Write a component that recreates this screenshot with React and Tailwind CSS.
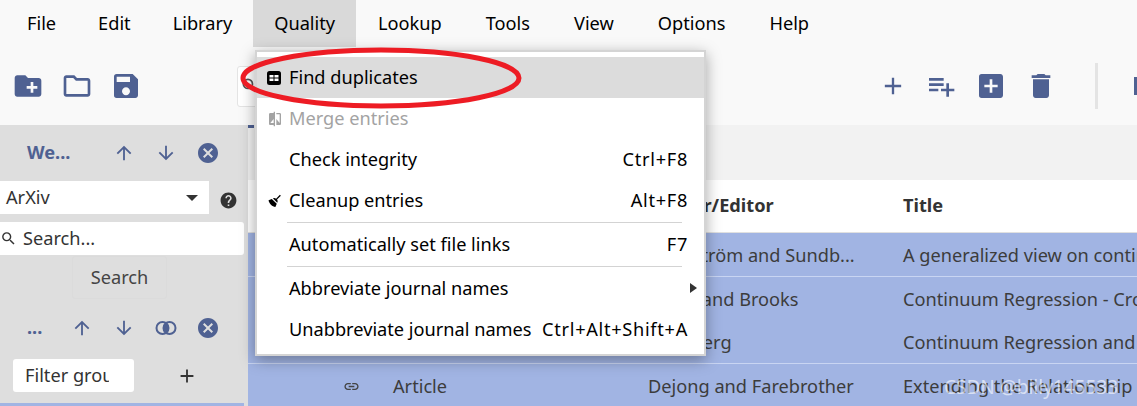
import React from 'react';
import {
  MdCreateNewFolder, MdOutlineFolder, MdSave, MdAdd, MdPlaylistAdd, MdAddBox, MdDelete,
  MdArrowUpward, MdArrowDownward, MdCancel, MdHelp, MdSearch, MdLink, MdCompare,
} from 'react-icons/md';

const iconColor = 'text-[#4f6192]';
const menus = ['File', 'Edit', 'Library', 'Quality', 'Lookup', 'Tools', 'View', 'Options', 'Help'];

const Broom = () => (
  <svg viewBox="0 0 24 24" className="w-[16px] h-[16px] fill-black">
    <path d="M19.36,2.72L20.78,4.14L15.06,9.85C16.13,11.39 16.28,13.24 15.38,14.44L9.06,8.12C10.26,7.22 12.11,7.37 13.65,8.44L19.36,2.72M5.93,17.57C3.92,15.56 2.69,13.16 2.33,10.92L7.2,8.83L14.67,16.3L12.58,21.17C10.34,20.81 7.94,19.58 5.93,17.57Z" />
  </svg>
);

const TableIcon = () => (
  <svg viewBox="0 0 14 14" className="w-[14px] h-[14px]">
    <rect width="14" height="14" rx="2.5" fill="#000" />
    <path d="M2.5 4h4v2.5h-4zM7.5 4h4v2.5h-4zM2.5 7.5h4V10h-4zM7.5 7.5h4V10h-4z" fill="#fff" />
  </svg>
);

const Overlap = () => (
  <svg viewBox="0 0 22 16" className="w-[22px] h-[16px] ml-[20px]">
    <path d="M11 3a6 6 0 0 1 0 10a6 6 0 0 1 0-10z" fill="#4f6192" />
    <circle cx="7.5" cy="8" r="6" fill="none" stroke="#4f6192" strokeWidth="2" />
    <circle cx="14.5" cy="8" r="6" fill="none" stroke="#4f6192" strokeWidth="2" />
  </svg>
);

const MenuRow = ({ icon, label, shortcut, arrow, active, disabled }) => (
  <div className={`flex items-center h-[41px] pl-[10px] pr-[16px] relative ${active ? 'bg-[#dcdcdc]' : ''} ${disabled ? 'text-[#a3a3a3]' : 'text-black'}`}>
    <span className="w-[22px] flex items-center justify-start">{icon}</span>
    <span className="flex-1 whitespace-nowrap">{label}</span>
    {shortcut && <span className="whitespace-nowrap tracking-[0.7px]">{shortcut}</span>}
    {arrow && <span className="absolute right-[7px] top-[15px] w-0 h-0 border-y-[5px] border-y-transparent border-l-[7px] border-l-[#333]" />}
  </div>
);

const Separator = () => <div className="h-[1px] bg-[#d3d3d3] ml-[30px] mr-[22px] my-[1px]" />;

const Row = ({ author, title, divider, icon, type }) => (
  <div className={`flex items-center h-[43.5px] pt-[3px] shrink-0 text-[#3c3c3c] whitespace-nowrap ${divider ? 'border-b border-[#c9d5f2]' : ''}`}>
    <span className="w-[145px] shrink-0 flex justify-end pr-[33px]">{icon && <MdLink size={17} className="text-[#444]" />}</span>
    <span className="w-[255px] shrink-0">{type}</span>
    <span className="w-[255px] shrink-0 overflow-hidden">{author}</span>
    <span>{title}</span>
  </div>
);

export default function App() {
  return (
    <div className="relative w-[1137px] h-[406px] overflow-hidden bg-[#f9f9f9] text-[18.2px] font-['Noto_Sans','Open_Sans',sans-serif]">
      {/* Menu bar */}
      <div className="flex h-[47px] pl-[6px] items-stretch text-black">
        {menus.map((m, i) => (
          <div key={m} className={`flex items-center ${i > 3 ? 'px-[22px]' : 'px-[21px]'} ${m === 'Quality' ? 'bg-[#d9d9d9]' : ''}`}>{m}</div>
        ))}
      </div>

      {/* Toolbar */}
      <div className={`flex items-center h-[78px] ${iconColor}`}>
        <div className="flex items-center w-[237px] shrink-0 pl-[12px] gap-[17px]">
          <MdCreateNewFolder size={32} />
          <MdOutlineFolder size={32} />
          <MdSave size={32} />
        </div>
        <div className="w-[460px] h-[41px] border border-[#e4e4e4] rounded-[3px] bg-white shrink-0 flex items-center pl-[2px] text-[#555]">
          <MdSearch size={20} />
        </div>
        <div className="flex items-center pl-[182px] gap-[18px] shrink-0">
          <MdAdd size={28} />
          <MdPlaylistAdd size={32} />
          <MdAddBox size={32} />
          <MdDelete size={32} />
        </div>
        <div className="w-[3px] h-[46px] bg-[#e4e4e4] ml-[38px] shrink-0" />
        <div className="w-[4px] h-[18px] ml-[36px] bg-[#4f6192] shrink-0" />
      </div>

      <div className="flex h-[281px]">
        {/* Side pane */}
        <div className="w-[248px] shrink-0 bg-[#dedede] flex flex-col">
          <div className={`flex items-center h-[56px] ${iconColor}`}>
            <span className="w-[111px] pl-[27px] font-bold">We...</span>
            <MdArrowUpward size={22} className="ml-[2px]" />
            <MdArrowDownward size={22} className="ml-[20px]" />
            <MdCancel size={24} className="ml-[19px]" />
          </div>
          <div className="flex items-center">
            <div className="w-[209px] h-[33px] bg-white flex items-center justify-between pl-[6px] pr-[11px] text-[#333]">
              ArXiv
              <span className="w-0 h-0 border-x-[6px] border-x-transparent border-t-[6px] border-t-[#333]" />
            </div>
            <MdHelp size={19} className="ml-[10px] mt-[6px] text-[#333]" />
          </div>
          <div className="flex items-center w-[244px] h-[33px] mt-[8px] bg-white rounded-r-[3px] text-[#333]">
            <MdSearch size={17} className="shrink-0" />
            <span className="ml-[6px]">Search...</span>
          </div>
          <div className="ml-[72px] w-[95px] h-[43px] mt-[1px] flex items-center justify-center text-[#444] border border-[#dbdbdb] rounded-[3px]">Search</div>
          <div className={`flex items-center h-[53px] mt-[2px] ${iconColor}`}>
            <span className="w-[71px] pl-[27px] font-bold">...</span>
            <MdArrowUpward size={22} />
            <MdArrowDownward size={22} className="ml-[20px]" />
            <Overlap />
            <MdCancel size={24} className="ml-[19px]" />
          </div>
          <div className="flex items-center mt-[5px]">
            <div className="ml-[13px] w-[121px] h-[33px] bg-white rounded-[3px] flex items-center pl-[12px] pr-[25px] text-[#333] overflow-hidden whitespace-nowrap">
              <span className="overflow-hidden">Filter groups</span>
            </div>
            <MdAdd size={22} className="ml-[42px] text-[#333]" />
          </div>
          <div className="w-[244px] h-[3px] mt-[11px] bg-[#a1b4e3]" />
        </div>

        {/* Main table */}
        <div className="flex-1 min-w-0 flex flex-col overflow-hidden">
          <div className="h-[55px] shrink-0 bg-[#f2f2f2]">
            <div className="w-[6px] h-[3px] bg-[#4f6192]" />
          </div>
          <div className="h-[53px] shrink-0 bg-white border-b border-[#e0e0e0] flex items-center font-bold text-[#333] whitespace-nowrap">
            <span className="w-[400px] shrink-0" />
            <span className="w-[255px] shrink-0">Author/Editor</span>
            <span>Title</span>
          </div>
          <div className="flex-1 bg-[#a1b4e3]">
            <Row type="Article" author="Björkström and Sundb..." title="A generalized view on continuum regression" divider />
            <Row type="Article" author="Stone and Brooks" title="Continuum Regression - Cross-Validated Sequentially" />
            <Row type="Article" author="Sundberg" title="Continuum Regression and Ridge Regression" divider />
            <Row icon type="Article" author="Dejong and Farebrother" title="Extending the Relationship" />
          </div>
        </div>
      </div>

      {/* Quality dropdown */}
      <div className="absolute left-[255px] top-[50px] w-[451px] h-[306px] bg-white border-2 border-[#d4d4d4] pt-[5px] shadow-[0_4px_14px_rgba(0,0,0,0.35)]">
        <MenuRow active icon={<TableIcon />} label="Find duplicates" />
        <MenuRow disabled icon={<MdCompare size={16} className="text-[#a3a3a3]" />} label="Merge entries" />
        <MenuRow label="Check integrity" shortcut="Ctrl+F8" />
        <MenuRow icon={<Broom />} label="Cleanup entries" shortcut="Alt+F8" />
        <Separator />
        <MenuRow label="Automatically set file links" shortcut="F7" />
        <Separator />
        <MenuRow arrow label="Abbreviate journal names" />
        <MenuRow label="Unabbreviate journal names" shortcut="Ctrl+Alt+Shift+A" />
      </div>

      {/* Red annotation */}
      <svg className="absolute left-[240px] top-[45px] pointer-events-none" width="290" height="70" viewBox="0 0 290 70">
        <ellipse cx="141" cy="33" rx="138" ry="28" fill="none" stroke="#ed1c24" strokeWidth="5" />
      </svg>

      {/* Watermark */}
      <span className="absolute left-[944px] top-[373px] text-white/60 text-[19px] whitespace-nowrap">CSDN @billy145533</span>
    </div>
  );
}
